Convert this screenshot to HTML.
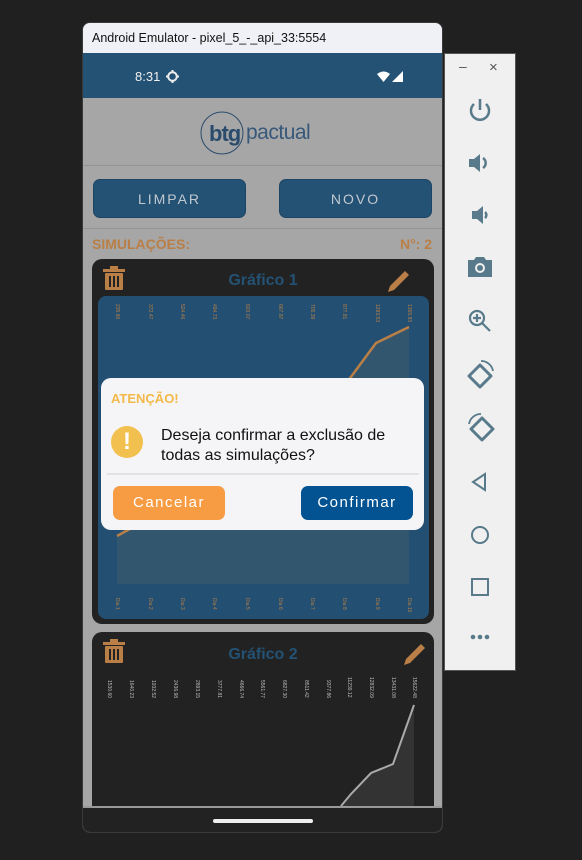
<!DOCTYPE html>
<html><head><meta charset="utf-8"><style>
*{margin:0;padding:0;box-sizing:border-box}
body{width:582px;height:860px;background:#202020;position:relative;overflow:hidden;font-family:"Liberation Sans",Roboto,sans-serif}
.abs{position:absolute}
.win{left:82px;top:22px;width:361px;height:811px;background:#a6a6a6;border-radius:8px;overflow:hidden;border:1px solid #3a3a3a}
.title{left:0;top:0;width:100%;height:30px;background:#eff1f6;font-size:12.5px;color:#111;padding:8px 0 0 9px}
.status{left:0;top:30px;width:100%;height:45px;background:#235274;color:#f0f0f0;font-size:13px}
.btn{background:#235274;border-radius:7px;color:#c2c8d0;font-size:14px;letter-spacing:2px;text-align:center;line-height:38px;border:1px solid #1c4565}
.card{background:#222;border-radius:10px}
.ttl{color:#235274;font-weight:bold;font-size:16px;text-align:center;width:100%}
.dlg{left:18px;top:355px;width:323px;height:152px;background:#f5f5f8;border-radius:10px}
.side{left:444px;top:53px;width:72px;height:618px;background:#f0f0f0;border:1px solid #555}
.side svg{position:absolute;left:22px}
</style></head><body>
<div class="abs win">
 <div class="abs title">Android Emulator - pixel_5_-_api_33:5554</div>
 <div class="abs status">
  <span class="abs" style="left:52px;top:16px">8:31</span>
  <svg class="abs" style="left:83px;top:17px" width="13" height="13" viewBox="0 0 13 13"><circle cx="6.5" cy="6.5" r="4.3" fill="none" stroke="#eee" stroke-width="2"/><path d="M6.5 0v3M6.5 10v3M0 6.5h3M10 6.5h3" stroke="#eee" stroke-width="2"/></svg>
  <svg class="abs" style="left:294px;top:18px" width="28" height="12" viewBox="0 0 28 12"><path d="M0 3Q6.5-2 13 3L6.5 11z" fill="#fff"/><path d="M26 0V11H15z" fill="#fff"/></svg>
 </div>
 <div class="abs" style="left:0;top:75px;width:100%;height:68px;border-bottom:1px solid #949494">
  <svg class="abs" style="left:112px;top:10px" width="140" height="50" viewBox="0 0 140 50"><circle cx="27" cy="25" r="21" fill="none" stroke="#2a4b6c" stroke-width="1"/><text x="14" y="33" font-family="Liberation Sans" font-weight="bold" font-size="22" fill="#2a4b6c" letter-spacing="-1">btg</text><text x="51" y="31" font-family="Liberation Sans" font-size="21" fill="#38587a" letter-spacing="-0.5">pactual</text></svg>
 </div>
 <div class="abs btn" style="left:10px;top:156px;width:153px;height:39px">LIMPAR</div>
 <div class="abs btn" style="left:196px;top:156px;width:153px;height:39px">NOVO</div>
 <div class="abs" style="left:0;top:205px;width:100%;border-top:1px solid #949494"></div>
 <div class="abs" style="left:9px;top:213px;color:#b97f46;font-weight:bold;font-size:14px">SIMULAÇÕES:</div>
 <div class="abs" style="right:10px;top:213px;color:#b97f46;font-weight:bold;font-size:14px">N°: 2</div>
 <div class="abs card" style="left:9px;top:236px;width:342px;height:365px">
  <div class="abs ttl" style="top:13px">Gráfico 1</div>
 </div>
 <div class="abs card" style="left:9px;top:609px;width:342px;height:200px">
  <div class="abs ttl" style="top:14px">Gráfico 2</div>
 </div>
 <svg class="abs" style="left:0;top:0" width="361" height="811" viewBox="82 22 361 811">
  <g fill="#b97f46"><rect x="102" y="268" width="22" height="3"/><rect x="109" y="265" width="8" height="3"/><rect x="104" y="272" width="18" height="17" rx="1"/></g>
  <g stroke="#222" stroke-width="2"><path d="M109 275v11M113 275v11M117 275v11"/></g>
  <g fill="#b97f46"><rect x="102" y="641" width="22" height="3"/><rect x="109" y="638" width="8" height="3"/><rect x="104" y="645" width="18" height="17" rx="1"/></g>
  <g stroke="#222" stroke-width="2"><path d="M109 648v11M113 648v11M117 648v11"/></g>
  <path d="M404 270l-15 15-2 6 6-2 15-15z" fill="#b97f46"/>
  <path d="M420 643l-15 15-2 6 6-2 15-15z" fill="#b97f46"/>
  <rect x="97" y="295" width="331" height="323" rx="8" fill="#234f72"/>
  <path d="M116 535L180 500L250 470L310 430L375 342L408 326V583H116z" fill="#33566f"/>
  <polyline points="116,535 180,500 250,470 310,430 375,342 408,326" fill="none" stroke="#b97f46" stroke-width="2.5"/>
  <g font-size="5" fill="#b97f46" font-family="Liberation Sans">
   <text transform="translate(115,303) rotate(90)">235.80</text><text transform="translate(148,303) rotate(90)">372.47</text><text transform="translate(180,303) rotate(90)">524.46</text><text transform="translate(212,303) rotate(90)">494.73</text><text transform="translate(245,303) rotate(90)">603.07</text><text transform="translate(278,303) rotate(90)">667.87</text><text transform="translate(310,303) rotate(90)">705.38</text><text transform="translate(342,303) rotate(90)">877.81</text><text transform="translate(375,303) rotate(90)">1283.53</text><text transform="translate(407,303) rotate(90)">1365.83</text>
   <text transform="translate(115,597) rotate(90)">Dia 1</text><text transform="translate(148,597) rotate(90)">Dia 2</text><text transform="translate(180,597) rotate(90)">Dia 3</text><text transform="translate(212,597) rotate(90)">Dia 4</text><text transform="translate(245,597) rotate(90)">Dia 5</text><text transform="translate(278,597) rotate(90)">Dia 6</text><text transform="translate(310,597) rotate(90)">Dia 7</text><text transform="translate(342,597) rotate(90)">Dia 8</text><text transform="translate(375,597) rotate(90)">Dia 9</text><text transform="translate(407,597) rotate(90)">Dia 10</text>
  </g>
  <path d="M340 805L350 793L370 772L392 763L413 704V805z" fill="#333"/>
  <polyline points="340,805 350,793 370,772 392,763 413,704" fill="none" stroke="#aaa" stroke-width="2"/>
  <g font-size="5" fill="#bbb" font-family="Liberation Sans">
   <text transform="translate(107,679) rotate(90)">1530.60</text><text transform="translate(129,679) rotate(90)">1640.23</text><text transform="translate(151,679) rotate(90)">1932.52</text><text transform="translate(173,679) rotate(90)">2436.98</text><text transform="translate(195,679) rotate(90)">2893.15</text><text transform="translate(217,679) rotate(90)">3777.81</text><text transform="translate(239,679) rotate(90)">4666.74</text><text transform="translate(260,679) rotate(90)">5561.77</text><text transform="translate(282,679) rotate(90)">6827.30</text><text transform="translate(304,679) rotate(90)">8511.42</text><text transform="translate(326,679) rotate(90)">9377.86</text><text transform="translate(347,676) rotate(90)">11239.12</text><text transform="translate(369,676) rotate(90)">12832.09</text><text transform="translate(391,676) rotate(90)">13431.08</text><text transform="translate(412,676) rotate(90)">15622.48</text>
  </g>
 </svg>
 <div class="abs" style="left:0;top:783px;width:100%;height:28px;background:#222;border-top:2px solid #999"></div>
 <div class="abs" style="left:130px;top:796px;width:100px;height:4px;border-radius:2px;background:#eee"></div>
 <div class="abs dlg">
  <div class="abs" style="left:10px;top:13px;color:#f2b94a;font-weight:bold;font-size:13px">ATENÇÃO!</div>
  <div class="abs" style="left:10px;top:48px;width:32px;height:32px;border-radius:50%;background:#f2c04e;color:#fff;font-weight:bold;font-size:24px;text-align:center;line-height:32px">!</div>
  <div class="abs" style="left:60px;top:48px;font-size:16px;line-height:20px;color:#111">Deseja confirmar a exclusão de<br>todas as simulações?</div>
  <div class="abs" style="left:6px;top:95px;width:312px;border-top:2px solid #e2e2e6"></div>
  <div class="abs" style="left:12px;top:108px;width:112px;height:34px;background:#f89c44;border-radius:7px;color:#fff;font-size:15px;letter-spacing:1.5px;text-align:center;line-height:34px">Cancelar</div>
  <div class="abs" style="left:200px;top:108px;width:112px;height:34px;background:#035392;border-radius:7px;color:#fff;font-size:15px;letter-spacing:1.5px;text-align:center;line-height:34px">Confirmar</div>
 </div>
</div>
<div class="abs side">
 <div class="abs" style="left:14px;top:4px;color:#555;font-size:14px">–</div>
 <div class="abs" style="left:44px;top:5px;color:#555;font-size:15px">×</div>
 <svg style="top:43px" width="26" height="26" viewBox="0 0 26 26"><path d="M7 7A9 9 0 1 0 19 7" fill="none" stroke="#587a8a" stroke-width="2.5"/><path d="M13 2v11" stroke="#587a8a" stroke-width="2.5"/></svg>
 <svg style="top:96px" width="26" height="26" viewBox="0 0 26 26"><path d="M2 9h5l6-5v18l-6-5H2z" fill="#587a8a"/><path d="M16 8a6 6 0 0 1 0 10" fill="none" stroke="#587a8a" stroke-width="2.5"/></svg>
 <svg style="top:148px" width="26" height="26" viewBox="0 0 26 26"><path d="M5 9h5l6-5v18l-6-5H5z" fill="#587a8a"/><path d="M18 10a4 4 0 0 1 0 6" fill="none" stroke="#587a8a" stroke-width="2.5"/></svg>
 <svg style="top:200px" width="26" height="26" viewBox="0 0 26 26"><path d="M1 6h6l2-3h8l2 3h6v17H1z" fill="#587a8a"/><circle cx="13" cy="14" r="5" fill="#f0f0f0"/><circle cx="13" cy="14" r="3" fill="#587a8a"/></svg>
 <svg style="top:254px" width="26" height="26" viewBox="0 0 26 26"><circle cx="10" cy="10" r="7" fill="none" stroke="#587a8a" stroke-width="2.2"/><path d="M15 15l8 8M10 6v8M6 10h8" stroke="#587a8a" stroke-width="2.2"/></svg>
 <svg style="top:305px" width="28" height="30" viewBox="0 0 28 30"><path d="M2 17L13 6L24 17L13 28z" fill="none" stroke="#587a8a" stroke-width="3" stroke-linejoin="round"/><path d="M14 2a12 12 0 0 1 12 10" fill="none" stroke="#587a8a" stroke-width="1.8"/></svg>
 <svg style="top:358px" width="28" height="30" viewBox="0 0 28 30"><path d="M4 17L15 6L26 17L15 28z" fill="none" stroke="#587a8a" stroke-width="3" stroke-linejoin="round"/><path d="M14 2a12 12 0 0 0 -12 10" fill="none" stroke="#587a8a" stroke-width="1.8"/></svg>
 <svg style="top:415px" width="26" height="26" viewBox="0 0 26 26"><path d="M18 5v16L6 13z" fill="none" stroke="#587a8a" stroke-width="2"/></svg>
 <svg style="top:468px" width="26" height="26" viewBox="0 0 26 26"><circle cx="13" cy="13" r="8" fill="none" stroke="#587a8a" stroke-width="2"/></svg>
 <svg style="top:520px" width="26" height="26" viewBox="0 0 26 26"><rect x="5" y="5" width="16" height="16" fill="none" stroke="#587a8a" stroke-width="2"/></svg>
 <svg style="top:578px" width="26" height="10" viewBox="0 0 26 10"><circle cx="6" cy="5" r="2.3" fill="#587a8a"/><circle cx="13" cy="5" r="2.3" fill="#587a8a"/><circle cx="20" cy="5" r="2.3" fill="#587a8a"/></svg>
</div>
</body></html>
